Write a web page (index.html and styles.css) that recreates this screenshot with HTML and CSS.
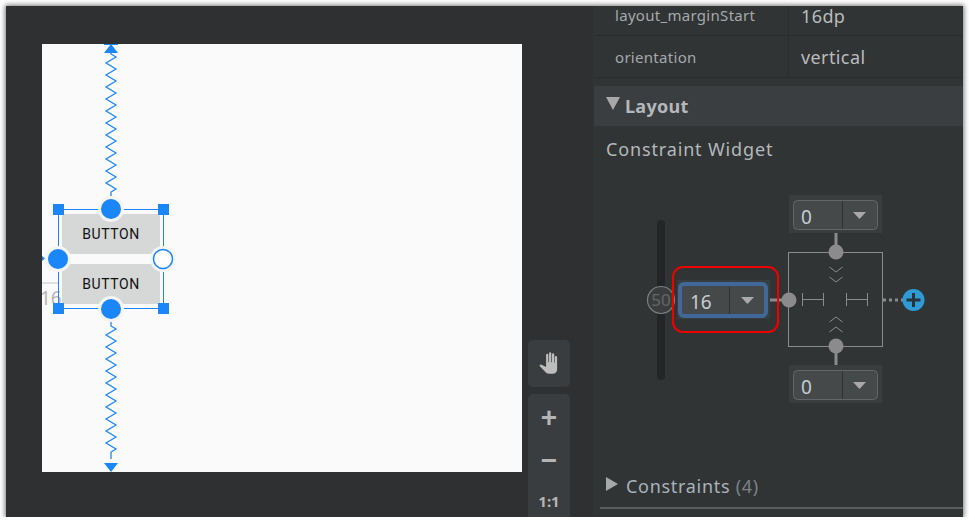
FILE: index.html
```html
<!DOCTYPE html>
<html lang="en">
<head>
  <meta charset="UTF-8" />
  <title>Layout editor</title>
  <link rel="stylesheet" href="styles.css">
</head>
<body>
  <div class="window">
    <div class="editor">
      <div class="canvas">
        <div class="margin-label">16</div>
        <div class="button-group">
          <div class="btn">BUTTON</div>
          <div class="btn">BUTTON</div>
        </div>
        <svg class="overlay" viewBox="42 44 480 428" width="480" height="428">
          <!-- springs -->
          <g class="spring">
            <path d="M111 48v6l5 3-10 6 10 6-10 6 10 6-10 6 10 6-10 6 10 6-10 6 10 6-10 6 10 6-10 6 10 6-10 6 10 6-10 6 10 6-10 6 10 6-10 6 10 6-5 3v4" />
            <path d="M111 322v4l5 3-10 6 10 6-10 6 10 6-10 6 10 6-10 6 10 6-10 6 10 6-10 6 10 6-10 6 10 6-10 6 10 6-10 6 10 6-10 6 10 6-5 3v7" />
          </g>
          <path class="blue" d="M111 44l7 9h-14zM111 472l-7-9h14z" />
          <path class="blue" d="M104 44h14v1h-14z" />
          <path class="margin-line" d="M42 283h16" />
          <path class="blue" d="M42 256v5l3-2.500z" />
          <!-- selection -->
          <rect class="select" x="58.500" y="209.500" width="105" height="99" />
          <g class="blue">
            <rect x="53" y="204" width="11" height="11" />
            <rect x="158" y="204" width="11" height="11" />
            <rect x="53" y="303" width="11" height="11" />
            <rect x="158" y="303" width="11" height="11" />
          </g>
          <g class="halo">
            <circle cx="111" cy="209" r="13" />
            <circle cx="111" cy="309" r="13" />
            <circle cx="58" cy="259" r="13" />
            <circle cx="163" cy="259" r="13" />
          </g>
          <g class="blue">
            <circle cx="111" cy="209" r="10" />
            <circle cx="111" cy="309" r="10" />
            <circle cx="58" cy="259" r="10" />
          </g>
          <circle class="hollow" cx="163" cy="259" r="9.500" />
        </svg>
      </div>
      <div class="tools">
        <div class="tool-box hand-box">
          <svg viewBox="0 0 22 22" width="25" height="25">
            <path class="hand" d="M8 3.500a1 1 0 0 1 2 0V10h.6V2.200a1 1 0 0 1 2 0V10h.6V3a1 1 0 0 1 2 0v7.400h.5V5.500a1 1 0 0 1 2 0V16c0 2.500-1.500 4-4 4H11c-2 0-3-.8-4-2l-4.500-4.500c-.7-.8.3-2 1.500-1.500L8 14z" />
          </svg>
        </div>
        <div class="tool-box zoom-box">
          <div class="tool-sign">+</div>
          <div class="tool-sign">−</div>
          <div class="tool-ratio">1:1</div>
        </div>
      </div>
    </div>

    <div class="panel">
      <div class="attr-row first">
        <div class="attr-name">layout_marginStart</div>
        <div class="attr-value">16dp</div>
      </div>
      <div class="attr-row">
        <div class="attr-name">orientation</div>
        <div class="attr-value">vertical</div>
      </div>
      <div class="section-head">
        <span class="tri-down"></span>
        <span>Layout</span>
      </div>
      <div class="widget-title">Constraint Widget</div>

      <svg class="widget" viewBox="593 165 370 300" width="370" height="300">
        <rect class="slider" x="657" y="220" width="8" height="160" rx="4" />
        <circle class="slider-knob" cx="661" cy="300" r="13.500" />
        <text class="knob-text" x="661" y="306" text-anchor="middle">50</text>

        <!-- box -->
        <rect class="box" x="788.500" y="252.500" width="94" height="94" />
        <path class="stem" d="M836 233v19M836 346v19M770 300h19" />
        <circle class="knob" cx="836" cy="252" r="7.500" />
        <circle class="knob" cx="836" cy="346" r="7.500" />
        <circle class="knob" cx="789" cy="300" r="7.500" />
        <path class="thin" d="M802.500 293v13M802.500 299.500h21M823.500 293v13M846.500 293v13M846.500 299.500h21M867.500 293v13" />
        <path class="thin" d="M829.500 267l6.500 5 6.500-5M829.500 277l6.500 5 6.500-5M829.500 322l6.500-5 6.500 5M829.500 332l6.500-5 6.500 5" />
        <path class="dots" d="M883 300h20" />
        <circle class="plus-bg" cx="913.500" cy="300" r="11" />
        <path class="plus" d="M906.500 300h14M913.500 293v14" />

        <!-- top combo -->
        <rect class="combo-bg" x="789" y="195" width="93" height="38" />
        <rect class="combo" x="793.500" y="200.500" width="84" height="29" rx="4" />
        <path class="combo-line" d="M842.500 201v28" />
        <path class="arrow" d="M853 212h13l-6.500 7z" />
        <text class="combo-text" x="801" y="224">0</text>

        <!-- bottom combo -->
        <rect class="combo-bg" x="789" y="365" width="93" height="38" />
        <rect class="combo" x="793.500" y="370.500" width="84" height="29" rx="4" />
        <path class="combo-line" d="M842.500 371v28" />
        <path class="arrow" d="M853 382h13l-6.500 7z" />
        <text class="combo-text" x="801" y="394">0</text>

        <!-- focused combo -->
        <rect class="combo-bg" x="677" y="280" width="93" height="39" />
        <rect class="combo-focus" x="680" y="284" width="86" height="32" rx="4" />
        <path class="combo-line" d="M729.500 287v27" />
        <path class="arrow" d="M741 297h13l-6.500 7z" />
        <text class="combo-text" x="690" y="309">16</text>

        <rect class="red-mark" x="673" y="267" width="105" height="65" rx="10" />
      </svg>

      <div class="section-closed">
        <span class="tri-right"></span>
        <span>Constraints <span class="count">(4)</span></span>
      </div>
    </div>
  </div>
</body>
</html>
```

FILE: styles.css
```css
body {
  margin: 0;
  background-color: #fff;
  font-family: "Noto Sans", "Open Sans", sans-serif;
}
.window {
  display: flex;
  width: 957px;
  height: 511px;
  margin: 6px 0 0 6px;
  background-color: #2f3031;
  box-shadow: 0 0 5px 1px #777;
  overflow: hidden;
}

/* design surface */
.editor {
  display: flex;
  align-items: flex-start;
  flex: none;
  width: 587px;
  height: 100%;
  padding: 38px 0 0 36px;
  box-sizing: border-box;
}
.canvas {
  position: relative;
  flex: none;
  width: 480px;
  height: 428px;
  background-color: #fafafa;
  overflow: hidden;
}
.overlay {
  position: absolute;
  left: 0;
  top: 0;
}
.button-group {
  position: absolute;
  left: 20px;
  top: 170px;
  display: flex;
  flex-direction: column;
  gap: 10px;
}
.btn {
  width: 98px;
  height: 40px;
  line-height: 40px;
  text-align: center;
  background-color: #d6d7d7;
  border-radius: 2px;
  color: #111;
  font-family: Roboto, sans-serif;
  font-size: 14px;
  font-weight: 400;
  letter-spacing: 0.6px;
}
.margin-label {
  position: absolute;
  left: -2px;
  top: 241px;
  color: #b5b5b5;
  font-size: 19px;
}
.spring path {
  fill: none;
  stroke: #1e88f5;
  stroke-width: 1.300;
}
.blue { fill: #1a86f8; }
.margin-line {
  stroke: #c4c4c4;
  stroke-width: 1;
}
.select {
  fill: none;
  stroke: #1a86f8;
  stroke-width: 1;
}
.halo { fill: #f4f4f4; }
.hollow {
  fill: #fff;
  stroke: #1a86f8;
  stroke-width: 1.500;
}

/* zoom tools */
.tools {
  display: flex;
  flex-direction: column;
  gap: 7px;
  flex: none;
  width: 42px;
  margin: 296px 0 0 6px;
}
.tool-box {
  display: flex;
  flex-direction: column;
  align-items: center;
  flex: none;
  background-color: #3a3d3f;
  border-radius: 5px;
}
.hand-box {
  justify-content: center;
  height: 47px;
}
.hand { fill: #bdbdbd; }
.zoom-box {
  height: 130px;
  color: #b4b4b4;
}
.tool-sign {
  height: 43px;
  line-height: 47px;
  font-family: "Liberation Sans", sans-serif;
  font-size: 28px;
  font-weight: 700;
}
.tool-ratio {
  margin-top: 11px;
  font-size: 15px;
  font-weight: 700;
}

/* attributes panel */
.panel {
  flex: 1;
  min-width: 0;
  background-color: #313435;
  color: #b4b8ba;
}
.attr-row {
  display: flex;
  align-items: center;
  height: 41px;
  border-bottom: 1px solid #2a2c2d;
  margin-left: 1px;
}
.attr-row.first {
  height: 29px;
  line-height: 20px;
}
.attr-name {
  display: flex;
  align-items: center;
  align-self: stretch;
  width: 195px;
  padding-left: 21px;
  box-sizing: border-box;
  border-right: 1px solid #2a2c2d;
  font-size: 15px;
  letter-spacing: 0.3px;
  color: #a5a9ab;
}
.attr-value {
  padding-left: 12px;
  font-size: 18px;
  letter-spacing: 0.4px;
  color: #b9bcbe;
}
.first .attr-name {
  padding-bottom: 11px;
}
.first .attr-value {
  align-self: flex-start;
}
.section-head {
  display: flex;
  align-items: center;
  gap: 5px;
  height: 40px;
  margin: 8px 0 0 1px;
  padding-left: 12px;
  background-color: #3b3e40;
  font-size: 18px;
  font-weight: 700;
  letter-spacing: 0.3px;
}
.tri-down {
  width: 0;
  height: 0;
  margin-top: -5px;
  border-left: 7px solid transparent;
  border-right: 7px solid transparent;
  border-top: 13px solid #a8a8a8;
}
.widget-title {
  height: 39px;
  padding: 11px 0 0 13px;
  box-sizing: border-box;
  font-size: 18px;
  letter-spacing: 0.85px;
}
.widget { display: block; }
.section-closed {
  display: flex;
  align-items: center;
  gap: 8px;
  height: 42px;
  margin-left: 7px;
  padding: 0 0 0 6px;
  border-bottom: 2px solid #5b5c5d;
  font-size: 18px;
  letter-spacing: 0.7px;
  color: #a8b2ba;
}
.tri-right {
  width: 0;
  height: 0;
  margin-top: -5px;
  border-top: 7px solid transparent;
  border-bottom: 7px solid transparent;
  border-left: 12px solid #a8a8a8;
}
.count { color: #7d8287; }

/* constraint widget */
.slider { fill: #232526; }
.slider-knob {
  fill: #3a3c3d;
  stroke: #7e7e7e;
  stroke-width: 1.200;
}
.knob-text {
  fill: #666;
  font-size: 17px;
}
.box {
  fill: none;
  stroke: #8b8b8b;
  stroke-width: 1;
}
.stem {
  stroke: #8b8b8b;
  stroke-width: 3;
  fill: none;
}
.knob { fill: #8b8b8b; }
.thin {
  fill: none;
  stroke: #8b8b8b;
  stroke-width: 1;
}
.dots {
  stroke: #8b8b8b;
  stroke-width: 3;
  stroke-dasharray: 3 3;
}
.plus-bg { fill: #2f9bd6; }
.plus {
  stroke: #27333b;
  stroke-width: 3;
}
.combo-bg { fill: #3a3d3e; }
.combo {
  fill: #45494a;
  stroke: #62666a;
  stroke-width: 1;
}
.combo-focus {
  fill: #45494a;
  stroke: #40699a;
  stroke-width: 4;
}
.combo-line {
  stroke: #2f3132;
  stroke-width: 1;
}
.arrow { fill: #a9a9a9; }
.combo-text {
  fill: #c5cdd2;
  font-size: 19px;
}
.red-mark {
  fill: none;
  stroke: #ee0000;
  stroke-width: 2;
}
```
